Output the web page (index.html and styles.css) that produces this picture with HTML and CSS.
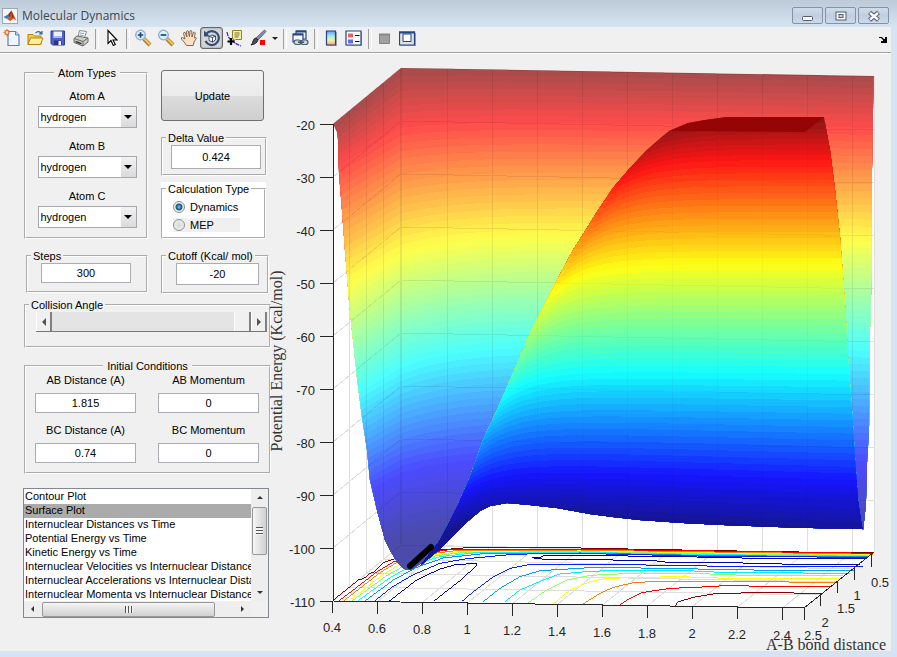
FILE: index.html
```html
<!DOCTYPE html>
<html lang="en">
<head>
<meta charset="utf-8">
<title>Molecular Dynamics</title>
<link rel="stylesheet" href="styles.css">
</head>
<body>
<header class="titlebar">
  <svg class="app-icon" viewBox="0 0 16 16" aria-hidden="true"><rect x=".5" y=".5" width="15" height="15" fill="#f4f6f8" stroke="#9aa7b5"/><path d="M1.500 9 6 6.500 8 8.500 5 11z" fill="#3b7fae"/><path d="M6 6.500 9.500 2.500 10.500 6 8 10z" fill="#8b3016"/><path d="M9.500 2.500 14.500 12.500 11.500 10.500 8.500 13 5 11 8 8.500z" fill="#d9541e"/><path d="M9.500 2.500 11.800 10.500 10 9z" fill="#7c2412"/></svg>
  <h1 class="title">Molecular Dynamics</h1>
  <div class="window-buttons">
    <button class="winbtn" aria-label="Minimize"><svg width="14" height="12"><rect x="1.500" y="6.500" width="10" height="4" rx="1" fill="#f8f8f8" stroke="#545c6c"/></svg></button>
    <button class="winbtn" aria-label="Maximize"><svg width="14" height="12"><rect x="2" y="2" width="10" height="8" fill="#f8f8f8" stroke="#545c6c"/><rect x="5" y="4.500" width="4" height="3" fill="#cbd6e2" stroke="#545c6c"/></svg></button>
    <button class="winbtn" aria-label="Close"><svg width="14" height="12"><path d="M2.500 2.500 11.500 10M11.500 2.500 2.500 10" stroke="#545c6c" stroke-width="4.500"/><path d="M3 3 11 9.500M11 3 3 9.500" stroke="#fafafa" stroke-width="2.400"/></svg></button>
  </div>
</header>

<div class="window">
<nav class="toolbar" aria-label="Figure toolbar">
  <button class="tool" aria-label="New Figure"><svg viewBox="0 0 18 18"><path d="M5 2.500h7.500l3.500 3.500v10.500H5z" fill="#fff"/><path d="M5 2.500v14h11V6l-3.500-3.500z" fill="#f0f6ff" stroke="#5a83b8" stroke-width="1.200"/><path d="M12.500 2.500V6H16" fill="#c8dcf4" stroke="#5a83b8"/><circle cx="4" cy="3.500" r="2" fill="#ffe0b0" stroke="#e2672c" stroke-width="1.200"/><path d="M4 0v1M4 6v1.500M.5 3.500h1M1.500 1l.8.8M6 1l-.8.8M1.500 6l.8-.8" stroke="#e2672c"/></svg></button>
  <button class="tool" aria-label="Open File"><svg viewBox="0 0 18 18"><path d="M2 15.500V5.500h5L8.500 7H15v8.500z" fill="#f5ca45" stroke="#b48312"/><path d="M2 15.500 4.500 9H17l-2.500 6.500z" fill="#fff0a0" stroke="#b48312"/><path d="M9.500 4q3-3 6 .5M16 2v3h-3" fill="none" stroke="#386598" stroke-width="1.200"/></svg></button>
  <button class="tool" aria-label="Save Figure"><svg viewBox="0 0 18 18"><path d="M2 2h13.500v14H3.500L2 14.500z" fill="#4f5fd0" stroke="#2f3c90"/><path d="M4.500 2.500h8.500v6H4.500z" fill="#eaf1fb"/><path d="M4.500 7h8.500v2H4.500z" fill="#a9bce8"/><path d="M5 11.500h7.500V16H5z" fill="#273480"/><path d="M9.500 12h2.500v4H9.500z" fill="#f1f1f1"/></svg></button>
  <button class="tool" aria-label="Print Figure"><svg viewBox="0 0 18 18"><path d="m6 8 1.500-6.500 7 1L12.500 9z" fill="#fff" stroke="#858b92"/><path d="M2 9.500 5 7l11 2v4l-5 4-9-3.500z" fill="#cdcdc6" stroke="#6a6a6a"/><path d="m2 9.500 9 3 5-3.500M11 12.500V17" fill="none" stroke="#6a6a6a"/><path d="m3.500 12.500 6 2.300" stroke="#3c3c3c" stroke-width="1.500"/><path d="m8 4 4 .5M7.500 6l4 .5" stroke="#79a1c8"/></svg></button>
  <span class="sep"></span>
  <button class="tool" aria-label="Edit Plot"><svg viewBox="0 0 18 18"><path d="M5 1.500v13l3-3 2.300 5 2-1-2.300-4.500h4z" fill="#fff" stroke="#000" stroke-width="1.100"/></svg></button>
  <span class="sep"></span>
  <button class="tool" aria-label="Zoom In"><svg viewBox="0 0 18 18"><path d="m10 10 6 6" stroke="#b6762b" stroke-width="4"/><path d="m10.500 10 5.500 5.500" stroke="#f2c163" stroke-width="2"/><circle cx="6.500" cy="6" r="4.800" fill="#d6f3fb" stroke="#8aaac8" stroke-width="1.300"/><path d="M6.500 3.200v5.600M3.700 6h5.600" stroke="#283d92" stroke-width="1.700"/></svg></button>
  <button class="tool" aria-label="Zoom Out"><svg viewBox="0 0 18 18"><path d="m10 10 6 6" stroke="#b6762b" stroke-width="4"/><path d="m10.500 10 5.500 5.500" stroke="#f2c163" stroke-width="2"/><circle cx="6.500" cy="6" r="4.800" fill="#d6f3fb" stroke="#8aaac8" stroke-width="1.300"/><path d="M3.700 6h5.600" stroke="#283d92" stroke-width="1.700"/></svg></button>
  <button class="tool" aria-label="Pan"><svg viewBox="0 0 18 18"><path d="M6.500 16.500Q4.500 13 1.500 10q-.8-1.700 1-1.500L5 10 3.500 4.500q0-1.500 1.500-1L7 8 6.500 2.500Q7 1 8.200 2L9.500 7.500 10 2q.8-1.200 1.800 0l.2 6 1.500-4.500q1.200-1 1.700.3L14.500 9q2-1 1.800.5L14 13l-.8 3.500z" fill="#ffe1c2" stroke="#765a48" stroke-width=".9"/></svg></button>
  <button class="tool pressed" aria-label="Rotate 3D" aria-pressed="true"><svg viewBox="0 0 18 18"><path d="M3.500 4.500A7 7 0 1 1 2.500 12" fill="none" stroke="#354c72" stroke-width="2.200"/><path d="M1 1.500v6h6z" fill="#354c72"/><path d="m6 7.500 3-1.500 3.500 1v4L9.500 13 6 11.500zM6 7.500l3.500 1 3-1.500M9.500 8.500V13" fill="#f4f6f8" stroke="#2f4264" stroke-width=".9"/></svg></button>
  <button class="tool" aria-label="Data Cursor"><svg viewBox="0 0 18 18"><path d="M1 3q1 6 4 8t4 3 6 3" fill="none" stroke="#2c36e0" stroke-width="1.300" stroke-dasharray="4 1"/><path d="M6.500 1.500h9v9h-6l-2 1.500V10h-1z" fill="#f5efa3" stroke="#8c8525"/><path d="M8.500 4h5M8.500 6h5M8.500 8h4" stroke="#77723a"/><path d="M5 9v7M1.500 12.500h7" stroke="#000" stroke-width="2.200"/></svg></button>
  <button class="tool" aria-label="Brush"><svg viewBox="0 0 18 18"><path d="M15.500 1 17 2.500 9 11 7 9z" fill="#8492b8" stroke="#40486c" stroke-width=".8"/><path d="M7 9l2 2q-1 4-7 5 2-2 2-4 1-3 3-3z" fill="#4c4c50" stroke="#29292b"/><path d="M11 11h5v5h-5z" fill="#f00"/></svg></button>
  <button class="caret" aria-label="Brush colour"></button>
  <span class="sep"></span>
  <button class="tool" aria-label="Link Plot"><svg viewBox="0 0 18 18"><path d="M5 2h10v8H5z" fill="#e9f1fa" stroke="#244783" stroke-width="1.200"/><path d="M5 2.500h10" stroke="#244783" stroke-width="2"/><path d="M2 5h10v8H2z" fill="#f5f9ff" stroke="#244783" stroke-width="1.200"/><path d="M2 5.500h10" stroke="#244783" stroke-width="2"/><g fill="#c9d5db" stroke="#465d6c" stroke-width="1.200"><rect x="3" y="11" width="7" height="4.500" rx="2.200"/><rect x="10" y="11" width="7" height="4.500" rx="2.200"/></g><path d="M7 13.200h6" stroke="#3b5261" stroke-width="1.500"/></svg></button>
  <span class="sep"></span>
  <button class="tool" aria-label="Insert Colorbar"><svg viewBox="0 0 18 18"><defs><linearGradient id="cb" x1="0" y1="0" x2="0" y2="1"><stop offset="0" stop-color="#7793f2"/><stop offset=".35" stop-color="#98edee"/><stop offset=".65" stop-color="#f3f4a0"/><stop offset="1" stop-color="#f5a08e"/></linearGradient></defs><path d="M5 3h10v14H5z" fill="#a6aab1"/><path d="M4.500 2h9v14h-9z" fill="url(#cb)" stroke="#25427c" stroke-width="1.200"/></svg></button>
  <button class="tool" aria-label="Insert Legend"><svg viewBox="0 0 18 18"><path d="M2 3h15v14H2z" fill="#a6aab1"/><path d="M1 2h15v14H1z" fill="#f8fbff" stroke="#25427c" stroke-width="1.200"/><path d="M3 4.500h5v4H3z" fill="#e46464"/><path d="M3 10.500h5v4H3z" fill="#6969e5"/><path d="M10 6.500h4.500M10 12.500h4.500" stroke="#111" stroke-width="1.200"/></svg></button>
  <span class="sep"></span>
  <button class="tool" aria-label="Hide Plot Tools"><svg viewBox="0 0 18 18"><path d="M3.500 5.500h10v9h-10z" fill="#a0a0a0" stroke="#868686"/><path d="M3 5.500h11" stroke="#868686" stroke-width="2"/></svg></button>
  <button class="tool" aria-label="Show Plot Tools"><svg viewBox="0 0 18 18"><path d="M1 4h16v13H1z" fill="#9ca0a8"/><path d="M.5 3h15v13H.5z" fill="#dce2e4" stroke="#254586" stroke-width="1.200"/><path d="M0 3.500h16" stroke="#254586" stroke-width="2"/><path d="M4 5h8v7.500H4z" fill="#fff" stroke="#254586"/></svg></button>
  <button class="dock" aria-label="Dock Figure"><svg width="8" height="7" viewBox="0 0 8 7"><path d="M0 1h3l2 2h1V1h2v6H2V5h2V4L2 2H0z" fill="#000"/></svg></button>
</nav>

<main class="figure">
  <form class="sidebar">
    <div class="pair">
      <fieldset class="panel atoms">
        <legend class="centered">Atom Types</legend>
        <div class="atom"><label for="atomA">Atom A</label><span class="drop"><select id="atomA"><option>hydrogen</option></select></span></div>
        <div class="atom"><label for="atomB">Atom B</label><span class="drop"><select id="atomB"><option>hydrogen</option></select></span></div>
        <div class="atom"><label for="atomC">Atom C</label><span class="drop"><select id="atomC"><option>hydrogen</option></select></span></div>
      </fieldset>
      <div class="stack">
        <button type="button" class="update">Update</button>
        <fieldset class="panel delta">
          <legend id="deltaL">Delta Value</legend>
          <input class="box" type="text" value="0.424" aria-labelledby="deltaL">
        </fieldset>
        <div class="white">
          <fieldset class="panel calc">
            <legend>Calculation Type</legend>
            <label class="radio"><input type="radio" name="calc" checked>Dynamics</label>
            <label class="radio grey"><input type="radio" name="calc">MEP</label>
          </fieldset>
        </div>
      </div>
    </div>
    <div class="pair short">
      <fieldset class="panel steps">
        <legend id="stepsL">Steps</legend>
        <input class="box" type="text" value="300" aria-labelledby="stepsL">
      </fieldset>
      <fieldset class="panel cutoff">
        <legend id="cutL">Cutoff (Kcal/ mol)</legend>
        <input class="box" type="text" value="-20" aria-labelledby="cutL">
      </fieldset>
    </div>
    <fieldset class="panel angle">
      <legend id="angL">Collision Angle</legend>
      <div class="slider">
        <button type="button" class="step left" aria-label="Decrease"></button>
        <input type="range" min="0" max="180" value="180" aria-labelledby="angL">
        <button type="button" class="step right" aria-label="Increase"></button>
      </div>
    </fieldset>
    <fieldset class="panel initial">
      <legend class="centered">Initial Conditions</legend>
      <div class="cells">
        <div class="cell"><label for="abd">AB Distance (A)</label><input class="box" id="abd" type="text" value="1.815"></div>
        <div class="cell"><label for="abm">AB Momentum</label><input class="box" id="abm" type="text" value="0"></div>
        <div class="cell"><label for="bcd">BC Distance (A)</label><input class="box" id="bcd" type="text" value="0.74"></div>
        <div class="cell"><label for="bcm">BC Momentum</label><input class="box" id="bcm" type="text" value="0"></div>
      </div>
    </fieldset>
    <div class="listbox">
      <select size="8" class="plots" aria-label="Plot type">
        <option>Contour Plot</option>
        <option selected>Surface Plot</option>
        <option>Internuclear Distances vs Time</option>
        <option>Potential Energy vs Time</option>
        <option>Kinetic Energy vs Time</option>
        <option>Internuclear Velocities vs Internuclear Distance</option>
        <option>Internuclear Accelerations vs Internuclear Distance</option>
        <option>Internuclear Momenta vs Internuclear Distance</option>
      </select>
      <div class="vbar"><i class="tri up"></i><i class="vthumb"></i><i class="tri down"></i></div>
      <div class="hbar"><i class="tri lt"></i><i class="hthumb"></i><i class="tri rt"></i></div>
    </div>
  </form>

  <svg class="plot" viewBox="271 54 620 597" role="img" aria-label="Potential energy surface">
    <defs>
      <clipPath id="backClip"><path d="M333 124 401 68 874 76 873 110 872 170 871 300 870 328 869 430 867 463 866 500 865 513 863 530 857 500 840 480 520 480 462 512 449 540 440 548 420 564 412 569 407 570 403 568 397 562 390 550 385 540 377 510 370 480 367 450 362 417 357 377 352 330 349 300 348 287 345 250 342 210 339 173 338 140 337 132z"/></clipPath>
      <clipPath id="frontClip"><path d="M420 566 440 540 457 507 470 477 483 440 497 410 510 380 527 340 537 320 547 300 557 280 573 250 582 236 597 212 613 188 630 168 647 150 663 136 669 131 688 123 705 120 727 117 824 117 830 150 835 190 840 237 843 277 846 320 848 357 852 410 855 457 858 500 862 527 863 529 853 529 812 528 777 527 723 525 683 523 640 520 613 517 590 514 557 508 530 505 507 503 490 506 480 511 467 522 450 539 440 549z"/></clipPath>
    </defs>
    <path d="M333 124 401 68 874 76V552L804 608 333 601z" fill="#fff"/>
    <g id="grid" class="grid"></g>
    <g class="contours" transform="translate(280 530) scale(.333333)">
      <path stroke="#800000" d="M160 210 235 150 252 145 270 130 282 126 310 98 340 88 385 74 480 60 560 53 900 54 1040 57 1480 65 1780 69"/>
      <path stroke="#f00" d="M178 212 290 126 340 96 420 72 500 60 900 58 1300 63 1780 70"/>
      <path stroke="#ff8000" d="M192 212 300 128 350 98 440 73 520 63 900 61 1300 66 1780 73"/>
      <path stroke="#ff0" d="M208 212 310 133 370 99 450 76 540 65 900 63 1300 69 1775 75"/>
      <path stroke="#80ff60" d="M217 212 320 137 390 98 470 77 550 67 900 65 1300 72 1775 77"/>
      <path stroke="#0ff" d="M233 213 330 143 400 104 480 80 580 69 900 67 1300 74 1765 79"/>
      <path stroke="#0090ff" d="M255 213 340 150 410 112 490 84 600 72 900 69 1300 77 1765 80"/>
      <path stroke="#0020ff" d="M285 212 335 172 400 134 480 100 560 86 690 74 770 71 930 71 1300 79 1760 82"/>
      <path stroke="#0000a8" d="M328 213 410 150 480 117 530 103 590 101 590 106 545 148 462 213"/>
      <path stroke="#0000a8" d="M1760 86 1400 86 1380 83 1270 83 1240 80 1040 78 790 77 785 81 755 82 775 87 990 88 1010 93 1130 93 1150 96 1350 98 1500 102 1740 104"/>
      <path stroke="#0020ff" d="M545 215 580 185 640 140 690 115 740 105 900 103 1090 104 1110 107 1250 107 1370 111 1750 111"/>
      <path stroke="#00a0ff" d="M610 215 660 175 720 140 780 122 930 113 1230 115 1290 120 1420 120 1460 123 1725 123"/>
      <path stroke="#00efff" d="M675 215 720 180 790 150 840 132 930 124 1020 121 1200 121 1300 126 1420 128 1710 130"/>
      <path stroke="#90ff60" d="M745 218 800 180 860 150 930 136 1080 129 1270 130 1310 134 1480 137 1690 138"/>
      <path stroke="#ff0" d="M822 220 870 180 930 155 980 145 1100 142 1220 139 1240 143 1460 146 1680 146"/>
      <path stroke="#ff8000" d="M905 225 960 190 1000 172 1060 158 1130 154 1290 154 1520 156 1670 157"/>
      <path stroke="#f00" d="M1020 225 1050 205 1085 188 1170 175 1250 172 1350 166 1400 168 1650 170"/>
      <path stroke="#900000" d="M1185 228 1195 215 1240 202 1300 192 1440 187 1540 189 1630 191"/>
    </g>
    <g id="back" clip-path="url(#backClip)"></g>
    <g id="front" clip-path="url(#frontClip)"></g>
    <path d="M669 131 688 123 705 120 727 117 824 117 805 132z" fill="#960505"/>
    <path class="track" d="M410 566 431 547"/>
    <path class="axis" d="M333 124V601L804 608 874 552"/>
    <g id="ticks" class="axis"></g>
    <g id="labels" class="ticktext"></g>
    <text class="axislabel" x="826" y="650" text-anchor="middle">A-B bond distance</text>
    <text class="axislabel" transform="translate(282 361) rotate(-90)" text-anchor="middle">Potential Energy (Kcal/mol)</text>
  </svg>
</main>
</div>
<script src="plot.js"></script>
</body>
</html>
```
FILE: styles.css
```css
* { box-sizing: border-box; }

body {
  margin: 0;
  min-height: 100vh;
  display: flex;
  flex-direction: column;
  background: #d6e3f2;
  font: 11px/14px "Liberation Sans", Arial, sans-serif;
  color: #000;
}

button, input, select { font: inherit; color: inherit; margin: 0; }

.titlebar {
  height: 27px;
  flex: none;
  display: flex;
  align-items: center;
  padding: 4px 8px 0 2px;
  background: linear-gradient(#bdcbd9, #d6e4f2);
}
.app-icon { width: 16px; height: 16px; }
.title {
  margin: 0 auto 0 4px;
  font: 12px/16px "Open Sans", "Noto Sans", sans-serif;
  color: #3d4754;
}
.window-buttons { display: flex; gap: 2px; }
.winbtn {
  width: 31px;
  height: 17px;
  padding: 0;
  display: flex;
  align-items: center;
  justify-content: center;
  border: 1px solid #8391aa;
  border-radius: 2px;
  background: linear-gradient(#d0dcea, #c0cfdf 50%, #cbdaea);
}

.window {
  flex: 1;
  margin: 0 6px 6px 0;
  background: #f0f0f0;
}
.toolbar {
  height: 27px;
  display: flex;
  align-items: flex-start;
  border-bottom: 1px solid #fff;
  box-shadow: inset 0 -1px #a0a0a0;
}
.tool {
  width: 23px;
  height: 22px;
  padding: 0;
  display: flex;
  align-items: center;
  justify-content: center;
  border: 0;
  border-radius: 3px;
  background: none;
}
.tool svg { width: 18px; height: 18px; }
.pressed {
  border: 1px solid #666;
  background: #d4d7da;
  box-shadow: inset 0 0 2px #777;
}
.sep { width: 8px; height: 22px; display: flex; }
.sep::before {
  content: "";
  width: 2px;
  margin: 2px 0 0 3px;
  border-left: 1px solid #a0a0a0;
  border-right: 1px solid #fff;
}
.caret {
  width: 11px;
  height: 22px;
  padding: 0;
  border: 0;
  background: none;
  display: flex;
  align-items: center;
  justify-content: center;
}
.caret::before {
  content: "";
  border: 3px solid transparent;
  border-top-color: #222;
  border-bottom: 0;
}
.dock { margin: 9px 4px 0 auto; padding: 0; border: 0; background: none; display: flex; }

.figure {
  display: grid;
  grid-template-columns: 271px 1fr;
  align-items: start;
}
.sidebar { padding: 12px 0 0 24px; }
.plot { width: 100%; display: block; overflow: visible; }

.pair {
  display: grid;
  grid-template-columns: 124px 108px;
  column-gap: 13px;
  align-items: start;
}
.panel {
  margin: 0;
  padding: 0;
  min-width: 0;
  border: 2px groove #fff;
}
.panel legend { margin-left: 3px; padding: 0 2px; white-space: nowrap; }
.panel legend.centered { margin: 0 auto; padding: 0 4px; }

.atoms {
  padding: 9px 0 9px 2px;
  display: grid;
  row-gap: 11px;
}
.atom { display: flex; flex-direction: column; align-items: center; gap: 3px; }
.drop { position: relative; width: 99px; height: 22px; display: block; }
.drop select {
  width: 100%;
  height: 100%;
  padding: 0 2px;
  border: 1px solid #a7a8ae;
  border-radius: 0;
  appearance: none;
  background: linear-gradient(#f2f2f2, #dadada) right / 15px 100% no-repeat #fff;
}
.drop::after {
  content: "";
  position: absolute;
  right: 5px;
  top: 9px;
  border: 4px solid transparent;
  border-top-color: #000;
  border-bottom: 0;
  pointer-events: none;
}

.stack { display: flex; flex-direction: column; padding-top: 4px; }
.update {
  width: 103px;
  height: 51px;
  border: 1px solid #707070;
  border-radius: 3px;
  background: linear-gradient(#f2f2f2, #ebebeb 50%, #dcdcdc 50%, #cfcfcf);
}
.box {
  display: block;
  width: 100%;
  height: 20px;
  padding: 0;
  border: 1px solid #abadb3;
  border-radius: 0;
  background: #fff;
  text-align: center;
}
.delta { width: 106px; height: 45px; margin-top: 10px; }
.delta .box { width: 90px; height: 24px; margin-left: 8px; }
.white { width: 105px; margin-top: 6px; background: #fff; }
.calc { height: 57px; }
.radio {
  display: flex;
  align-items: center;
  gap: 5px;
  width: 67px;
  height: 14px;
  margin: 4px 0 0 10px;
}
.radio.grey { background: #f0f0f0; }
.radio input {
  appearance: none;
  width: 12px;
  height: 12px;
  border: 1px solid #8e8f8f;
  border-radius: 50%;
  background: radial-gradient(#d8d8d8, #f4f4f4);
}
.radio input:checked { background: radial-gradient(#5fd0f0 0, #17507c 3px, #f0f0f0 4px); }

.short { margin-top: 10px; }
.steps { height: 44px; margin-left: 2px; }
.steps .box { width: 90px; margin-left: 13px; }
.cutoff { height: 45px; }
.cutoff .box { width: 83px; height: 22px; margin-left: 13px; }

.angle { margin-top: 4px; height: 50px; }
.slider { display: flex; height: 20px; margin: 0 2px 0 10px; border-bottom: 1px solid #777; }
.slider input {
  flex: 1;
  min-width: 0;
  height: 19px;
  appearance: none;
  background: #e4e4e4;
}
.slider input::-webkit-slider-thumb {
  appearance: none;
  width: 17px;
  height: 19px;
  background: #f0f0f0;
  border-left: 1px solid #fff;
  border-right: 2px solid #808080;
}
.step {
  width: 16px;
  height: 19px;
  padding: 0;
  display: flex;
  align-items: center;
  justify-content: center;
  border: 0;
  border-left: 1px solid #fff;
  border-right: 2px solid #808080;
  background: #f0f0f0;
}
.step::before { content: ""; border: 4px solid transparent; }
.step.left::before { border-right-color: #555; border-left: 0; }
.step.right::before { border-left-color: #555; border-right: 0; }

.initial { margin: 11px 0 0; height: 115px; }
.cells {
  display: grid;
  grid-template-columns: 101px 101px;
  gap: 10px 22px;
  padding-left: 9px;
}
.cell { display: flex; flex-direction: column; align-items: center; gap: 6px; }

.listbox {
  display: grid;
  grid-template: 112px 16px / 1fr 17px;
  margin: 14px 2px 0 -1px;
  border: 1px solid #828790;
  background: #f0f0f0;
}
.plots {
  min-width: 0;
  height: 112px;
  padding: 1px 0 0;
  border: 0;
  border-radius: 0;
  background: #fff;
  overflow: hidden;
  outline: 0;
}
.plots option { height: 14px; min-height: 0; padding: 0 1px; line-height: 14px; color: #000; }
.plots option:checked { background: #ababab linear-gradient(#ababab, #ababab); }
.vbar, .hbar { display: flex; align-items: center; justify-content: space-between; background: #eee; }
.vbar { flex-direction: column; padding: 7px 0; }
.hbar { padding: 0 7px; }
.tri { border: 3px solid transparent; }
.up { border-bottom-color: #333; border-top: 0; }
.down { border-top-color: #333; border-bottom: 0; }
.lt { border-right-color: #333; border-left: 0; }
.rt { border-left-color: #333; border-right: 0; }
.vthumb, .hthumb {
  display: flex;
  align-items: center;
  justify-content: center;
  border: 1px solid #979797;
  border-radius: 2px;
}
.vthumb { width: 15px; height: 48px; margin: 8px 0 auto; background: linear-gradient(90deg, #f5f5f5, #d0d0d0); }
.hthumb { width: 173px; height: 15px; margin: 0 auto 0 8px; background: linear-gradient(#f5f5f5, #d0d0d0); }
.vthumb::before { content: ""; width: 7px; height: 8px; background: repeating-linear-gradient(#555 0 1px, #f4f4f4 1px 3px); }
.hthumb::before { content: ""; width: 8px; height: 7px; background: repeating-linear-gradient(90deg, #555 0 1px, #f4f4f4 1px 3px); }

.grid { fill: none; stroke: #dedede; shape-rendering: crispEdges; }
.shade { fill: none; stroke: #000; stroke-opacity: .08; shape-rendering: crispEdges; }
.faint { stroke-opacity: .03; }
.contours { fill: none; stroke-width: 3; shape-rendering: crispEdges; }
.axis { fill: none; stroke: #262626; shape-rendering: crispEdges; }
.track { fill: none; stroke: #000; stroke-width: 6; stroke-linecap: round; }
.ticktext { font: 13px "Liberation Sans", Arial, sans-serif; fill: #262626; }
.axislabel { font: 16px "Liberation Serif", "Times New Roman", serif; fill: #333; }
```
FILE: plot.js
```js
const NS = 'http://www.w3.org/2000/svg';
const byId = id => document.getElementById(id);

function add(parent, tag, attrs, text) {
  const node = document.createElementNS(NS, tag);
  for (const key in attrs) node.setAttribute(key, attrs[key]);
  if (text !== undefined) node.textContent = text;
  parent.appendChild(node);
  return node;
}

// Piecewise-linear lookup; ts and vs have equal length.
function lerp(ts, vs, t) {
  let i = 1;
  while (i < ts.length - 1 && t > ts[i]) i++;
  const f = Math.min(1, Math.max(0, (t - ts[i - 1]) / (ts[i] - ts[i - 1])));
  return vs[i - 1] + (vs[i] - vs[i - 1]) * f;
}

// Jet colour map, from dark red (0) to dark blue (1), blended over a base level.
const jet = [0, 1 / 8, 3 / 8, 5 / 8, 7 / 8, 1];
function colour(t, base) {
  const ch = stops => Math.round(base + (255 - base) * lerp(jet, stops, t));
  return `rgb(${ch([.5, 1, 1, 0, 0, 0])},${ch([0, 0, 1, 1, 0, 0])},${ch([0, 0, 0, 1, 1, .5])})`;
}

function sheet(group, base, x0, iso) {
  const steps = 64;
  for (let i = 0; i < steps; i++) {
    const t = i / steps;
    let d = `M${x0} 640`;
    for (let x = x0; x <= 880; x += 4) d += `L${x} ${i ? iso(x, t).toFixed(1) : 60}`;
    add(group, 'path', { d: d + 'V640z', fill: colour((i + .5) / steps, base), 'shape-rendering': 'crispEdges' });
  }
}

sheet(byId('back'), 75, 329, (x, t) => {
  const y = lerp(jet, [70, 123, 236, 346, 456, 530], t) + (x - 590) * .017;
  const corner = lerp(jet, [2, 8, 20, 25, 20, 16], t);
  if (x >= 401) return y + corner * Math.exp((401 - x) / 60);
  const k = lerp(jet, [.84, .62, .6, .6, .55, .5], t);
  return y + corner + (401 - x) * k;
});

sheet(byId('front'), 21, 401, (x, t) => {
  const y = lerp(jet, [118, 160, 264, 373, 477, 530], t);
  const edge = lerp(jet, [665, 623, 555, 503, 460, 440], t);
  const rise = lerp(jet, [10, 20, 27, 27, 27, 27], t);
  const slope = lerp(jet, [0, 0, 0, .01, .03, .06], t);
  return y + (x - 750) * slope + rise * Math.exp(-Math.max(0, x - edge) / 32);
});

// Grid lines on the walls and the floor.
let walls = '';
let floor = '';
for (let i = 0; i < 10; i++) {
  const y = 124 + 53 * i;
  walls += `M333 ${y}L401 ${y - 56}L874 ${y - 47}`;
}
for (let i = 0; i < 10; i++) {
  const x = 447 + 45 * i;
  walls += `M${x} ${69 + i * .8}V${545 + i * .8}`;
  floor += `M${x} ${545 + i * .8}L${377 + 45 * i} ${602 + i * .7}`;
}
walls += 'M401 68V544M874 76V552';
for (let i = 0; i < 4; i++) {
  const x = 349 + 17 * i;
  walls += `M${x} ${111 - 14 * i}V${587 - 14 * i}`;
  floor += `M${x} ${587 - 14 * i}L${820 + 17 * i} ${595 - 13 * i}`;
}
add(byId('grid'), 'path', { d: walls + floor });
add(byId('back'), 'path', { d: walls, class: 'shade' });
add(byId('front'), 'path', { d: walls, class: 'shade faint' });

// Ticks and their labels.
let ticks = '';
const labels = byId('labels');
for (let i = 0; i < 10; i++) {
  const y = 124 + 53 * i;
  ticks += `M320 ${y}H333`;
  add(labels, 'text', { x: 315, y: y + 6, 'text-anchor': 'end' }, String(-20 - 10 * i));
}
['0.4', '0.6', '0.8', '1', '1.2', '1.4', '1.6', '1.8', '2', '2.2', '2.4'].forEach((name, i) => {
  const x = 332 + 45 * i;
  ticks += `M${x} ${601 + i * .7}v12`;
  add(labels, 'text', { x, y: Math.round(632 + i * .8), 'text-anchor': 'middle' }, name);
});
ticks += 'M804 608v12';
add(labels, 'text', { x: 813, y: 640, 'text-anchor': 'middle' }, '2.5');
[['0.5', 880, 587], ['1', 857, 600], ['1.5', 846, 613], ['2', 825, 627]].forEach(([name, x, y], i) => {
  ticks += `M${871 - 17 * i} ${555 + 13 * i}v12`;
  add(labels, 'text', { x, y, 'text-anchor': 'middle' }, name);
});
add(byId('ticks'), 'path', { d: ticks });
```
